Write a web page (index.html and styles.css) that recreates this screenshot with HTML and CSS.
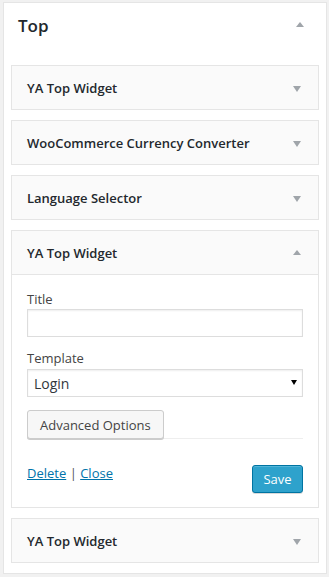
FILE: index.html
```html
<!DOCTYPE html>
<html>
<head>
  <title>Widgets - Top</title>
  <link rel="stylesheet" href="styles.css">
</head>
<body>
  <div class="sidebar">
    <div class="sidebar-name">
      <h2>Top</h2>
      <svg class="arrow" width="8" height="5" viewBox="0 0 8 5"><path d="M0 5 L4 0 L8 5 Z"/></svg>
    </div>

    <div class="widget-list">
      <!-- closed widgets -->
      <div class="widget">
        <div class="widget-top">
          <h3>YA Top Widget</h3>
          <svg class="arrow down" width="8" height="6" viewBox="0 0 8 6"><path d="M0 0 L8 0 L4 6 Z"/></svg>
        </div>
      </div>

      <div class="widget">
        <div class="widget-top">
          <h3>WooCommerce Currency Converter</h3>
          <svg class="arrow down" width="8" height="6" viewBox="0 0 8 6"><path d="M0 0 L8 0 L4 6 Z"/></svg>
        </div>
      </div>

      <div class="widget">
        <div class="widget-top">
          <h3>Language Selector</h3>
          <svg class="arrow down" width="8" height="6" viewBox="0 0 8 6"><path d="M0 0 L8 0 L4 6 Z"/></svg>
        </div>
      </div>

      <!-- open widget -->
      <div class="widget open">
        <div class="widget-top">
          <h3>YA Top Widget</h3>
          <svg class="arrow up" width="8" height="5" viewBox="0 0 8 5"><path d="M0 5 L4 0 L8 5 Z"/></svg>
        </div>
        <div class="widget-inside">
          <div class="field">
            <label for="title">Title</label>
            <input type="text" id="title">
          </div>
          <div class="field field-template">
            <label for="template">Template</label>
            <div class="select-wrap">
              <select id="template">
                <option>Login</option>
              </select>
              <svg class="select-arrow" width="6" height="5" viewBox="0 0 6 5"><path d="M0 0 L6 0 L3 5 Z"/></svg>
            </div>
          </div>
          <div class="advanced">
            <button class="button">Advanced Options</button>
          </div>
          <div class="widget-control-actions">
            <div class="links">
              <a href="#">Delete</a> | <a href="#">Close</a>
            </div>
            <button class="button button-primary">Save</button>
          </div>
        </div>
      </div>

      <div class="widget">
        <div class="widget-top">
          <h3>YA Top Widget</h3>
          <svg class="arrow down" width="8" height="6" viewBox="0 0 8 6"><path d="M0 0 L8 0 L4 6 Z"/></svg>
        </div>
      </div>
    </div>
  </div>
</body>
</html>
```

FILE: styles.css
```css
body {
  font-family: 'Open Sans', sans-serif;
  font-size: 13px;
  background-color: #f1f1f1;
  color: #23282d;
  margin: 0;
}
.sidebar {
  background-color: #fff;
  border: 1px solid #e5e5e5;
  margin: 2px 2px 2px 3px;
  padding: 0 7px 10px 7px;
}
.sidebar-name {
  display: flex;
  align-items: center;
  justify-content: space-between;
  padding: 11px 15px 0 7px;
}
.sidebar-name h2 {
  margin: 0;
  font-size: 17px;
  font-weight: 600;
  line-height: 24px;
}
.sidebar-name .arrow {
  margin-top: -4px;
}
.arrow {
  fill: #a0a5aa;
  display: block;
}
.widget-list {
  padding-top: 27px;
}
.widget {
  border: 1px solid #e5e5e5;
  background-color: #fafafa;
  margin-bottom: 10px;
}
.widget:last-child {
  margin-bottom: 0;
}
.widget-top {
  height: 43px;
  display: flex;
  align-items: center;
  justify-content: space-between;
  padding: 0 17px 0 15px;
}
.widget-top h3 {
  margin: 0;
  font-size: 13px;
  font-weight: 600;
  line-height: 18px;
}
.widget-top .arrow.down {
  margin-top: 3px;
}
.widget-top .arrow.up {
  margin-top: -1px;
}
.widget.open .widget-top {
  border-bottom: 1px solid #e5e5e5;
}
.widget-inside {
  background-color: #fff;
  padding: 15px 15px 14px 15px;
}
.field label {
  display: block;
  line-height: 18px;
  color: #444;
}
.field input {
  display: block;
  box-sizing: border-box;
  width: 100%;
  height: 28px;
  margin: 1px 0 0 0;
  border: 1px solid #ddd;
  box-shadow: inset 0 1px 2px rgba(0, 0, 0, 0.07);
  font-family: 'Open Sans', sans-serif;
}
.field-template {
  margin-top: 12px;
}
.select-wrap {
  position: relative;
  margin-top: 2px;
}
.select-wrap select {
  display: block;
  box-sizing: border-box;
  width: 100%;
  height: 28px;
  -webkit-appearance: none;
  appearance: none;
  background-color: #fff;
  border: 1px solid #ddd;
  border-radius: 0;
  box-shadow: inset 0 1px 2px rgba(0, 0, 0, 0.07);
  padding: 0 6px;
  font-family: 'Open Sans', sans-serif;
  font-size: 14px;
  color: #32373c;
}
.select-arrow {
  position: absolute;
  right: 6px;
  top: 11px;
  fill: #000;
}
.advanced {
  margin-top: 13px;
  border-bottom: 1px solid #eee;
  display: flex;
}
.button {
  box-sizing: border-box;
  height: 29px;
  padding: 0 12px;
  margin-bottom: -1px;
  font-family: 'Open Sans', sans-serif;
  font-size: 13px;
  color: #444;
  background-color: #f7f7f7;
  border: 1px solid #ccc;
  border-radius: 3px;
  box-shadow: 0 1px 0 #ccc;
  cursor: pointer;
}
.widget-control-actions {
  display: flex;
  justify-content: space-between;
  align-items: flex-start;
  margin-top: 25px;
}
.links {
  line-height: 18px;
  color: #555;
}
.links a {
  color: #0073aa;
}
.button-primary {
  margin: 1px 0 0 0;
  width: 51px;
  height: 28px;
  padding: 0;
  color: #fff;
  background-color: #2ea2cc;
  border-color: #0074a2;
  box-shadow: inset 0 1px 0 rgba(120, 200, 230, 0.5), 0 1px 0 rgba(0, 0, 0, 0.15);
}
```
